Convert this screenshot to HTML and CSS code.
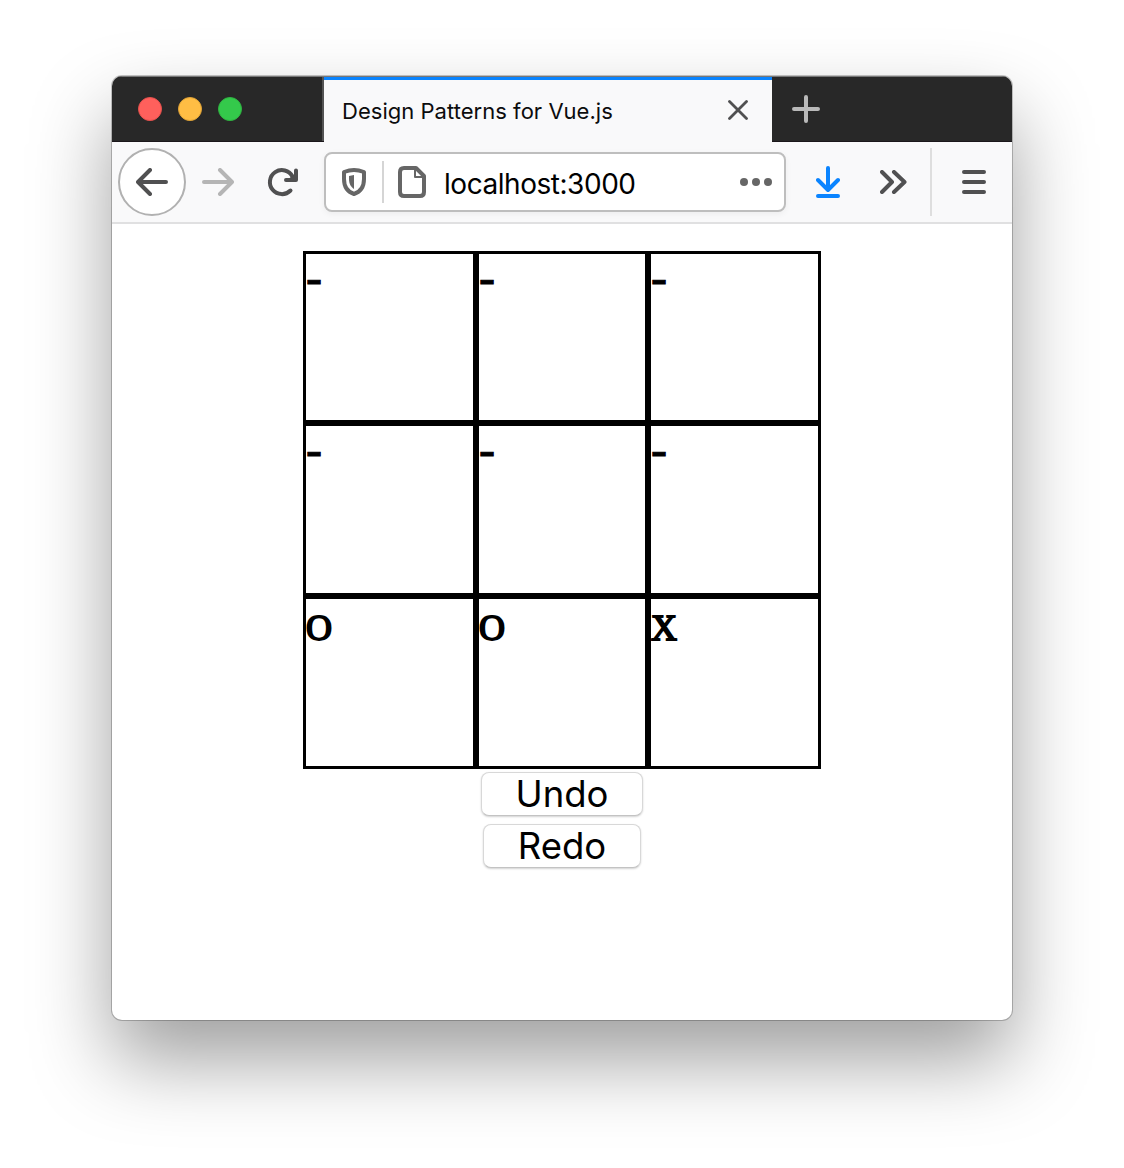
FILE: index.html
```html
<!DOCTYPE html>
<html lang="en">
<head>
<meta charset="utf-8">
<title>Design Patterns for Vue.js</title>
<link rel="stylesheet" href="styles.css">
</head>
<body>
<div class="window">
  <header class="tabs">
    <div class="lights"><i class="red"></i><i class="yellow"></i><i class="green"></i></div>
    <div class="tab">
      <span class="tab-title">Design Patterns for Vue.js</span>
      <svg class="close" width="20" height="20" viewBox="0 0 20 20"><path d="M1.5 1.5l17 17M18.5 1.5l-17 17"/></svg>
    </div>
    <svg class="plus" width="28" height="28" viewBox="0 0 28 28"><path d="M14 2v24M2 14h24"/></svg>
  </header>
  <nav class="toolbar">
    <button class="back" aria-label="Back"><svg width="32" height="28" viewBox="0 0 32 28"><path d="M30 14H3M14 2L2 14l12 12"/></svg></button>
    <svg class="forward" width="32" height="28" viewBox="0 0 32 28"><path d="M2 14h27M18 2l12 12-12 12"/></svg>
    <svg class="reload" width="32" height="30" viewBox="0 0 32 30"><path d="M24.500 23.500A12 12 0 1 1 26.500 9.500"/><path d="M30 3.500V13H20"/><path class="fill" d="M31 5v9H20z"/></svg>
    <div class="address">
      <svg class="shield" width="24" height="28" viewBox="0 0 24 28"><path d="M12 2c3.500 0 6.500.7 10 2v7c0 8-4 13-10 15C6 24 2 19 2 11V4c3.500-1.300 6.500-2 10-2z"/><path class="fill" d="M12 7v14c-3-2-5-5-5-10V8z"/></svg>
      <span class="divider"></span>
      <svg class="page" width="28" height="32" viewBox="0 0 28 32"><path d="M6 2h12l8 8v16q0 4-4 4H6q-4 0-4-4V6q0-4 4-4z"/><path class="fold" d="M17 2v9h9"/></svg>
      <span class="url">localhost:3000</span>
      <svg class="dots" width="32" height="8" viewBox="0 0 32 8"><circle cx="4" cy="4" r="4"/><circle cx="16" cy="4" r="4"/><circle cx="28" cy="4" r="4"/></svg>
    </div>
    <svg class="download" width="24" height="32" viewBox="0 0 24 32"><path d="M12 2v21M2 14l10 10 10-10M2 30h20"/></svg>
    <svg class="more" width="27" height="24" viewBox="0 0 27 24"><path d="M2 2l10 10L2 22M14 2l10.500 10L14 22"/></svg>
    <span class="separator"></span>
    <svg class="menu" width="24" height="24" viewBox="0 0 24 24"><path d="M2 2h20M2 12h20M2 22h20"/></svg>
  </nav>
  <main>
    <div class="board">
      <div class="cell"><span class="dash">-</span></div><div class="cell"><span class="dash">-</span></div><div class="cell"><span class="dash">-</span></div>
      <div class="cell"><span class="dash">-</span></div><div class="cell"><span class="dash">-</span></div><div class="cell"><span class="dash">-</span></div>
      <div class="cell mark">O</div><div class="cell mark">O</div><div class="cell mark">X</div>
    </div>
    <button class="action undo">Undo</button>
    <button class="action redo">Redo</button>
  </main>
</div>
</body>
</html>
```
FILE: styles.css
```css
* { box-sizing: border-box; }
body { margin: 0; height: 1168px; padding: 76px 112px 0; background: #fff; font-family: Inter, "Liberation Sans", sans-serif; overflow: hidden; }
svg { display: block; flex: none; fill: none; stroke: #505051; stroke-width: 4; stroke-linecap: round; stroke-linejoin: round; }
svg .fill { fill: #505051; stroke: none; }
button { padding: 0; font-family: inherit; color: #000; }
.window { width: 900px; height: 944px; border-radius: 10px; overflow: hidden; background: #fff; box-shadow: 0 0 0 1px rgba(0,0,0,.22), 0 40px 80px rgba(0,0,0,.38); }
.tabs { height: 66px; display: flex; background: #282828; border-top: 1px solid #777; border-bottom: 1px solid #1b171b; }
.lights { width: 212px; display: flex; gap: 16px; padding: 20px 0 0 26px; border-right: 2px solid #535353; }
.lights i { width: 24px; height: 24px; border-radius: 50%; border: 1px solid; }
.lights .red { background: #ff605c; border-color: #e6504c; }
.lights .yellow { background: #ffbd44; border-color: #e0a336; }
.lights .green { background: #34c94b; border-color: #2fb441; }
.tab { width: 448px; height: 65px; display: flex; justify-content: space-between; padding: 0 24px 0 18px; background: #f9f9fa; border-top: 3px solid #0a84ff; }
.tab-title { margin-top: 16px; font-size: 22px; line-height: 30px; letter-spacing: .03px; white-space: nowrap; color: #0c0c0d; }
.close { margin-top: 20px; stroke-width: 2.800; }
.plus { margin: 18px 0 0 20px; stroke: #b9b9b9; }
.toolbar { height: 82px; display: flex; align-items: center; padding: 0 26px 0 6px; background: #f9f9fa; border-bottom: 2px solid #e0e0e1; }
.back { width: 68px; height: 68px; display: grid; place-items: center; border: 2px solid #b1b1b1; border-radius: 50%; background: #fff; }
.forward { margin-left: 16px; stroke: #b5b5b5; }
.reload { margin-left: 32px; }
.address { width: 462px; height: 60px; margin-left: 26px; display: flex; align-items: center; padding: 0 12px 0 16px; border: 2px solid #bebebe; border-radius: 8px; background: #fff; box-shadow: 0 2px 6px rgba(0,0,0,.05); }
.address svg { stroke: #666; }
.address .fill { fill: #666; }
.divider { width: 2px; height: 42px; margin: 0 14px 0 16px; background: #d5d5d5; }
.page .fold { stroke-width: 2; }
.url { margin-left: 18px; padding-top: 3px; font-size: 28px; line-height: 36px; letter-spacing: -.46px; }
.address .dots { margin-left: auto; fill: #666; stroke: none; }
.download { margin-left: 30px; stroke: #0a84ff; }
.more { margin-left: 40px; }
.separator { width: 2px; height: 68px; margin-left: 23px; background: #dedede; }
.menu { margin-left: 30px; }
main { display: flex; flex-direction: column; align-items: center; padding-top: 27px; }
.board { display: grid; grid-template-columns: 173px 172px 173px; grid-template-rows: 172px 173px 173px; }
.cell { border: 3px solid #000; padding-top: 7px; font: 37px/42px "Liberation Serif", serif; -webkit-text-stroke: 1px #000; }
.mark { padding-top: 8px; font-size: 36px; -webkit-text-stroke-width: 1.800px; }
.dash { display: inline-block; font-size: 48px; line-height: 34px; }
.action { height: 44px; border: 1px solid #d8d8d8; border-bottom-color: #c3c3c3; border-radius: 8px; background: #fff; box-shadow: 0 1px 2px rgba(0,0,0,.18); font-size: 36.500px; line-height: 40px; }
.undo { width: 162px; margin-top: 3px; }
.redo { width: 158px; margin-top: 8px; }
```
